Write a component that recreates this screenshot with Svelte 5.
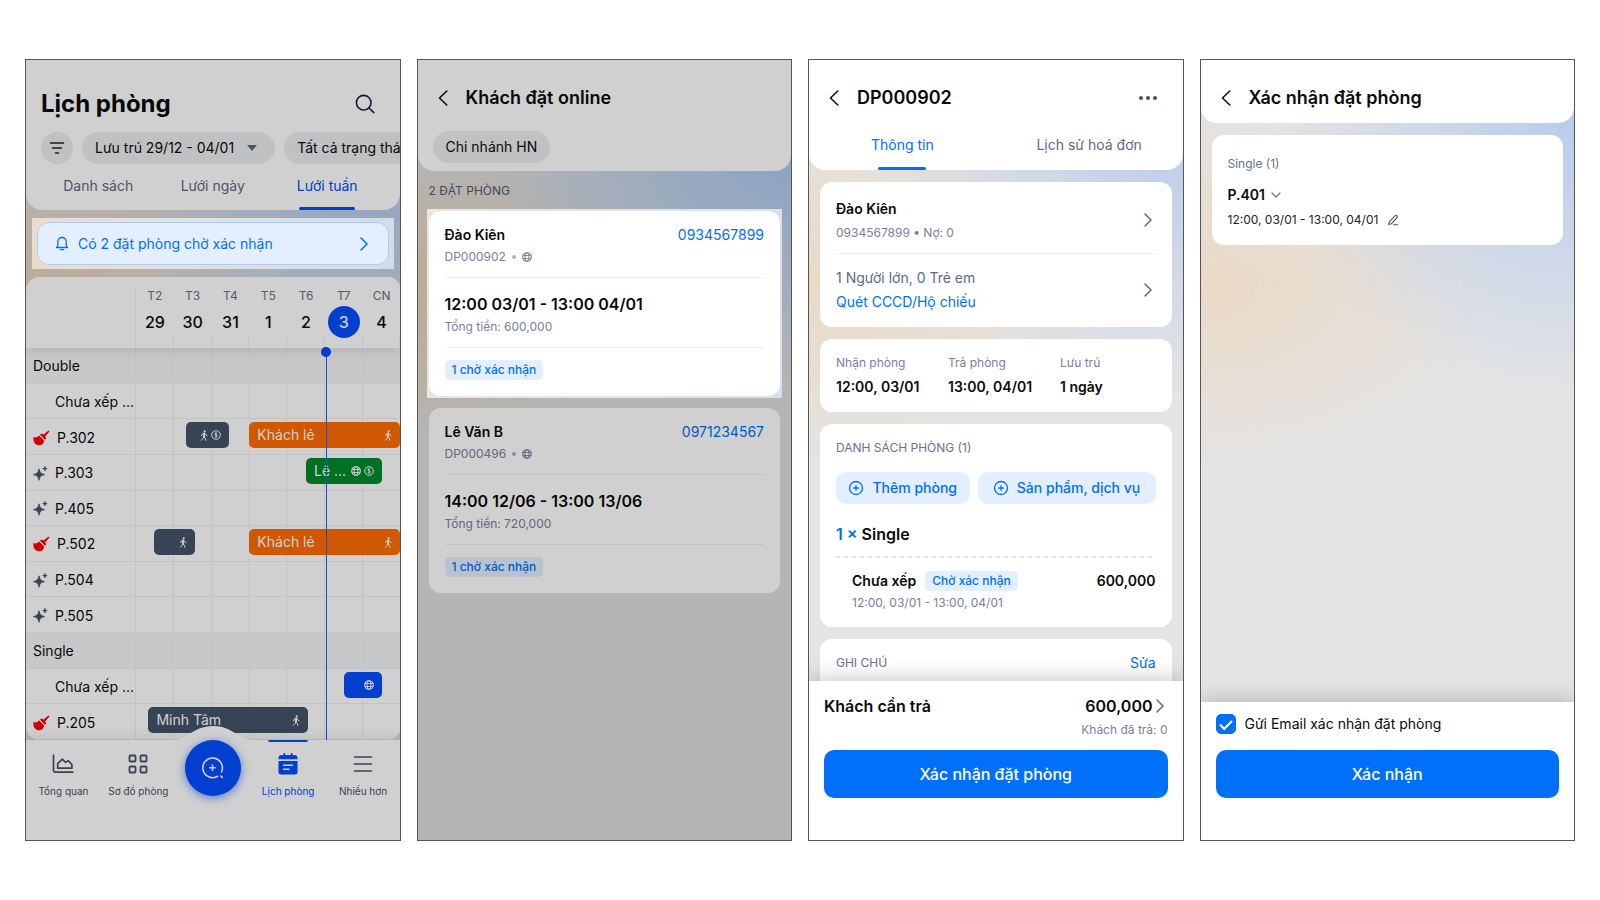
<script>
  const days = [
    { d: 'T2', n: 29 }, { d: 'T3', n: 30 }, { d: 'T4', n: 31 }, { d: 'T5', n: 1 },
    { d: 'T6', n: 2 }, { d: 'T7', n: 3, today: true }, { d: 'CN', n: 4 }
  ];

  // start and span are counted in day columns
  const rows = [
    { name: 'Double', kind: 'group' },
    { name: 'Chưa xếp ...', kind: 'none' },
    { name: 'P.302', kind: 'dirty', bars: [
      { start: 1.33, span: 1.12, tone: 'slate', icons: ['walk', 'coin'] },
      { start: 3, span: 4, tone: 'orange', text: 'Khách lẻ', icons: ['walk'] }
    ] },
    { name: 'P.303', kind: 'clean', bars: [{ start: 4.5, span: 2.02, tone: 'green', text: 'Lê ...', icons: ['globe', 'coin'] }] },
    { name: 'P.405', kind: 'clean' },
    { name: 'P.502', kind: 'dirty', bars: [
      { start: 0.48, span: 1.09, tone: 'slate', icons: ['walk'] },
      { start: 3, span: 4, tone: 'orange', text: 'Khách lẻ', icons: ['walk'] }
    ] },
    { name: 'P.504', kind: 'clean' },
    { name: 'P.505', kind: 'clean' },
    { name: 'Single', kind: 'group' },
    { name: 'Chưa xếp ...', kind: 'none', bars: [{ start: 5.5, span: 1.02, tone: 'blue', icons: ['globe'] }] },
    { name: 'P.205', kind: 'dirty', bars: [{ start: 0.33, span: 4.23, tone: 'slate', text: 'Minh Tâm', icons: ['walk'] }] }
  ];
  const nowAt = 5.03;

  const bookings = [
    { name: 'Đào Kiên', phone: '0934567899', code: 'DP000902', time: '12:00 03/01 - 13:00 04/01', total: '600,000', focus: true },
    { name: 'Lê Văn B', phone: '0971234567', code: 'DP000496', time: '14:00 12/06 - 13:00 13/06', total: '720,000' }
  ];

  let sendEmail = $state(true);
</script>

{#snippet icon(name)}
  {#if name === 'walk'}
    <svg viewBox="0 0 8 11" width="8" height="11" fill="none" stroke="currentColor" stroke-linecap="round" stroke-linejoin="round">
      <circle cx="4.7" cy="1.3" r="1.1" fill="currentColor" stroke="none" />
      <path d="M4.3 3.4 3.9 6.6" stroke-width="1.8" />
      <path d="M4.2 3.1 2.3 4 1.7 5.6M4.8 3.6l.8 1.3 1.4.6M3.7 6.8 3 8.5 1.3 10.3M4.1 6.8l1.3 1.5.4 2" stroke-width="1" />
    </svg>
  {:else if name === 'coin'}
    <svg viewBox="0 0 10 10" width="10" height="10" fill="none" stroke="currentColor">
      <circle cx="5" cy="5" r="4.3" stroke-width="1" />
      <path d="M6.4 3.7C6.1 3.1 5.6 3 5 3c-.8 0-1.4.3-1.4.9C3.6 5.3 6.4 4.5 6.4 6c0 .7-.6 1-1.4 1-.7 0-1.2-.2-1.5-.8M5 2.2v5.6" stroke-width=".8" />
    </svg>
  {:else if name === 'globe'}
    <svg viewBox="0 0 10 10" width="10" height="10" fill="none" stroke="currentColor">
      <circle cx="5" cy="5" r="4.3" stroke-width="1.1" />
      <ellipse cx="5" cy="5" rx="2" ry="4.3" />
      <path d="M.7 3.5h8.600M.7 6.5h8.600" stroke-width=".9" />
    </svg>
  {:else if name === 'dirty'}
    <svg viewBox="0 0 17 16" width="17" height="16" fill="#ff0000">
      <path d="M15.2.8c.7-.3 1.4.5.9 1.1l-4.1 4.500.7.8c.6.7.4 1.6-.2 2.1l-.7.5L7 4.7l.6-.6c.6-.6 1.5-.6 2.1 0l.6.6z" />
      <path d="M6.3 5.3 11.1 10.4C10.800 13 9 15.2 6.2 15.3 3.2 15.4.9 13.2.5 10.3L.3 6.8l1.900.9 1.200-.8 1.100.1z" />
      <path d="m6.5 5 4.900 5.200" stroke="#fff" stroke-width=".8" />
    </svg>
  {:else if name === 'clean'}
    <svg viewBox="0 0 15 15" width="15" height="15" fill="#44546a">
      <path d="M6 2.800C6.700 6.500 7.800 7.800 11.600 8.600 7.800 9.400 6.700 10.700 6 14.300 5.300 10.700 4.200 9.400.4 8.600 4.200 7.800 5.300 6.500 6 2.800z" stroke="#44546a" stroke-width=".8" stroke-linejoin="round" />
      <path d="M11.900.3v4.600M9.600 2.600h4.600" stroke="#44546a" stroke-width="1.400" />
    </svg>
  {:else if name === 'back'}
    <svg viewBox="0 0 10 16" width="10" height="16" fill="none" stroke="#111" stroke-width="1.600" stroke-linecap="round" stroke-linejoin="round"><path d="M8.800 1 1.500 8l7.300 7" /></svg>
  {:else if name === 'next'}
    <svg viewBox="0 0 8 14" width="8" height="14" fill="none" stroke="currentColor" stroke-width="1.500" stroke-linecap="round" stroke-linejoin="round"><path d="m1 1 6 6-6 6" /></svg>
  {:else if name === 'plus'}
    <svg viewBox="0 0 16 16" width="16" height="16" fill="none" stroke="currentColor" stroke-width="1.300"><circle cx="8" cy="8" r="6.500" /><path d="M8 5.200v5.600M5.200 8h5.600" /></svg>
  {/if}
{/snippet}

<main class="board">
  <section class="phone dimmed">
    <header class="top">
      <div class="title-row">
        <h1 class="big">Lịch phòng</h1>
        <button class="plain" aria-label="Tìm kiếm">
          <svg viewBox="0 0 20 20" width="20" height="20" fill="none" stroke="#16263f" stroke-width="1.600" stroke-linecap="round"><circle cx="8.700" cy="8.700" r="7.300" /><path d="m14 14 4.800 4.600" /></svg>
        </button>
      </div>
      <div class="chips">
        <button class="chip round" aria-label="Bộ lọc">
          <svg viewBox="0 0 16 14" width="16" height="14" stroke="#222" stroke-width="1.500" stroke-linecap="round"><path d="M1.500 2h13M3.500 7h9M6.500 12h3" /></svg>
        </button>
        <button class="chip date">Lưu trú 29/12 - 04/01 <span class="caret"></span></button>
        <button class="chip">Tất cả trạng thái</button>
      </div>
      <nav class="tabs three">
        <a href="#list">Danh sách</a>
        <a href="#day">Lưới ngày</a>
        <a href="#week" class="on">Lưới tuần</a>
      </nav>
    </header>

    <div class="spot notice-spot">
      <button class="notice">
        <svg viewBox="0 0 14 15" width="14" height="15" fill="none" stroke="currentColor" stroke-width="1.300" stroke-linecap="round" stroke-linejoin="round"><path d="M2.800 9.600V5.700a4.200 4.200 0 0 1 8.400 0v3.900l1.300 1.900h-11zM5.400 13.600h3.200M7 1.400V.8" /></svg>
        <span>Có 2 đặt phòng chờ xác nhận</span>
        {@render icon('next')}
      </button>
    </div>

    <table class="week">
      <thead>
        <tr>
          <th class="corner" aria-label="Phòng"></th>
          {#each days as day}
            <th class="day" class:today={day.today}><small>{day.d}</small><b>{day.n}</b></th>
          {/each}
        </tr>
      </thead>
      <tbody>
        {#each rows as row}
          <tr class={row.kind}>
            <th class="room">
              {#if row.kind === 'dirty' || row.kind === 'clean'}{@render icon(row.kind)}{/if}
              <span>{row.name}</span>
            </th>
            <td class="track">
              {#each row.bars ?? [] as bar}
                <span class="bar {bar.tone}" style="left: {(bar.start / 7) * 100}%; width: {(bar.span / 7) * 100}%">
                  {#if bar.text}<span class="who">{bar.text}</span>{/if}
                  {#each bar.icons as name}{@render icon(name)}{/each}
                </span>
              {/each}
            </td>
          </tr>
        {/each}
      </tbody>
      <caption class="now-area"><span class="now" style="left: {(nowAt / 7) * 100}%"></span></caption>
    </table>

    <nav class="bottom">
      <svg class="hump" viewBox="0 0 90 16" width="90" height="16"><path d="M0 16C20 16 24 1 45 1s25 15 45 15z" fill="#fff" /></svg>
      <a href="#overview">
        <svg viewBox="0 0 22 20" width="22" height="20" fill="none" stroke="#44546a" stroke-width="1.700" stroke-linecap="round" stroke-linejoin="round"><path d="M1.500 1v15.500c0 1 .6 1.600 1.600 1.600h17.700M5.700 14.200V9.600l4.600-4.500 3.300 3.300 2.700-1.800 3.600 4v3.600z" /></svg>
        <span>Tổng quan</span>
      </a>
      <a href="#rooms">
        <svg viewBox="0 0 20 20" width="20" height="20" fill="none" stroke="#44546a" stroke-width="1.800"><rect x="1.500" y="1.500" width="6" height="6" rx="1" /><rect x="12.500" y="1.500" width="6" height="6" rx="1" /><rect x="1.500" y="12.500" width="6" height="6" rx="1" /><rect x="12.500" y="12.500" width="6" height="6" rx="1" /></svg>
        <span>Sơ đồ phòng</span>
      </a>
      <div class="fab-slot">
        <button class="fab" aria-label="Đặt phòng">
          <svg viewBox="0 0 24 24" width="24" height="24" fill="none" stroke="#fff" stroke-width="1.600" stroke-linecap="round"><path d="M16.600 20.300a9.800 9.800 0 1 1 3.900-4.300M11.500 9v5.400M8.800 11.700h5.400M19.800 20l1.500 1.500" /></svg>
        </button>
      </div>
      <a href="#calendar" class="on">
        <svg viewBox="0 0 20 22" width="20" height="22" fill="#004eff"><path d="M3.500 2h2V.8a.9.900 0 0 1 1.800 0V2h5.400V.8a.9.900 0 0 1 1.800 0V2h2A3 3 0 0 1 19.500 5v1.200H.5V5a3 3 0 0 1 3-3zM.5 8h19v11a2.500 2.500 0 0 1-2.500 2.500H3A2.500 2.500 0 0 1 .5 19z" /><path d="M5.500 12.300h9M5.500 16.300h5.500" stroke="#fff" stroke-width="1.500" stroke-linecap="round" /></svg>
        <span>Lịch phòng</span>
      </a>
      <a href="#more">
        <svg viewBox="0 0 20 18" width="20" height="18" stroke="#44546a" stroke-width="1.700" stroke-linecap="round"><path d="M1.500 2h17M1.500 9h17M1.500 16h17" /></svg>
        <span>Nhiều hơn</span>
      </a>
    </nav>
  </section>

  <section class="phone dimmed">
    <header class="top sub">
      <div class="title-row">
        <button class="plain" aria-label="Quay lại">{@render icon('back')}</button>
        <h2>Khách đặt online</h2>
      </div>
      <div class="chips"><button class="chip">Chi nhánh HN</button></div>
    </header>
    <p class="count">2 ĐẶT PHÒNG</p>
    <div class="bookings">
      {#each bookings as b}
        <div class:spot={b.focus} class="booking-slot">
          <article class="card booking">
            <div class="line"><strong>{b.name}</strong><a href="tel:{b.phone}">{b.phone}</a></div>
            <div class="meta">{b.code}<i class="dot"></i>{@render icon('globe')}</div>
            <hr />
            <div class="when">{b.time}</div>
            <div class="meta">Tổng tiền: {b.total}</div>
            <hr />
            <span class="tag">1 chờ xác nhận</span>
          </article>
        </div>
      {/each}
    </div>
  </section>

  <section class="phone">
    <header class="top sub">
      <div class="title-row">
        <button class="plain" aria-label="Quay lại">{@render icon('back')}</button>
        <h2>DP000902</h2>
        <button class="plain" aria-label="Thêm">
          <svg viewBox="0 0 18 4" width="18" height="4" fill="#44546a"><circle cx="2" cy="2" r="2" /><circle cx="9" cy="2" r="2" /><circle cx="16" cy="2" r="2" /></svg>
        </button>
      </div>
      <nav class="tabs two">
        <a href="#info" class="on">Thông tin</a>
        <a href="#history">Lịch sử hoá đơn</a>
      </nav>
    </header>
    <div class="scroll">
      <article class="card guest">
        <a href="#guest" class="entry">
          <span class="stack"><strong>Đào Kiên</strong><span class="meta">0934567899 • Nợ: 0</span></span>
          {@render icon('next')}
        </a>
        <hr />
        <a href="#people" class="entry">
          <span class="stack"><span class="people">1 Người lớn, 0 Trẻ em</span><span class="link">Quét CCCD/Hộ chiếu</span></span>
          {@render icon('next')}
        </a>
      </article>
      <dl class="card stay">
        <div><dt>Nhận phòng</dt><dd>12:00, 03/01</dd></div>
        <div><dt>Trả phòng</dt><dd>13:00, 04/01</dd></div>
        <div><dt>Lưu trú</dt><dd>1 ngày</dd></div>
      </dl>
      <article class="card rooms">
        <h3>DANH SÁCH PHÒNG (1)</h3>
        <div class="adds">
          <button class="add">{@render icon('plus')} Thêm phòng</button>
          <button class="add wide">{@render icon('plus')} Sản phẩm, dịch vụ</button>
        </div>
        <div class="type"><span>1 ×</span> Single</div>
        <svg class="dash" height="2" width="100%"><path d="M0 1h2000" stroke="#e3e6ea" stroke-width="2" stroke-dasharray="4 4" /></svg>
        <div class="unit">
          <div class="line"><span class="state"><strong>Chưa xếp</strong><span class="tag">Chờ xác nhận</span></span><strong>600,000</strong></div>
          <div class="meta">12:00, 03/01 - 13:00, 04/01</div>
        </div>
      </article>
      <article class="card note">
        <div class="line"><h3>GHI CHÚ</h3><a href="#edit">Sửa</a></div>
      </article>
    </div>
    <footer class="foot pay">
      <div class="line due"><strong>Khách cần trả</strong><a href="#pay">600,000 {@render icon('next')}</a></div>
      <div class="meta paid">Khách đã trả: 0</div>
      <button class="primary">Xác nhận đặt phòng</button>
    </footer>
  </section>

  <section class="phone">
    <header class="top short">
      <div class="title-row">
        <button class="plain" aria-label="Quay lại">{@render icon('back')}</button>
        <h2>Xác nhận đặt phòng</h2>
      </div>
    </header>
    <div class="scroll">
      <article class="card pick">
        <div class="kind">Single (1)</div>
        <button class="plain number">P.401
          <svg viewBox="0 0 10 6" width="10" height="6" fill="none" stroke="#64748b" stroke-width="1.200" stroke-linecap="round" stroke-linejoin="round"><path d="m1 1 4 4 4-4" /></svg>
        </button>
        <div class="dates">12:00, 03/01 - 13:00, 04/01
          <button class="plain" aria-label="Sửa ngày">
            <svg viewBox="0 0 12 12" width="12" height="12" fill="none" stroke="#44546a" stroke-width="1.100" stroke-linecap="round" stroke-linejoin="round"><path d="M1.700 10.500 2.300 7.900 8.100 1.700c.9-.9 2.900.9 2 1.900L4.300 9.800zM6.500 10.700h4.200" /></svg>
          </button>
        </div>
      </article>
    </div>
    <footer class="foot">
      <label class="check"><input type="checkbox" bind:checked={sendEmail} /> Gửi Email xác nhận đặt phòng</label>
      <button class="primary">Xác nhận</button>
    </footer>
  </section>
</main>

<style>
  :global(body) { margin: 0; background: #fff; }
  .board {
    box-sizing: border-box; height: 100vh; min-height: 860px; padding: 59px 25px;
    display: grid; grid-template-columns: repeat(4, minmax(0, 1fr)); gap: 16px;
    font-family: Inter, "Noto Sans", sans-serif; font-size: 14px; line-height: 20px; color: #0a0a0a;
  }
  .board :global(*) { box-sizing: border-box; }
  button { font: inherit; color: inherit; border: 0; cursor: pointer; }
  a { color: #0070f4; text-decoration: none; }
  svg { display: block; flex: none; }
  h1, h2, h3, p, dl, dd { margin: 0; }
  strong { font-weight: 600; }
  hr { width: 100%; height: 1px; margin: 0; border: 0; background: #edeff1; }
  .plain { background: none; padding: 0; display: flex; align-items: center; }

  .phone {
    position: relative; display: flex; flex-direction: column; overflow: hidden; min-height: 0;
    border: 1px solid #555;
    background:
      radial-gradient(ellipse 300px 280px at 100% 60px, #b8cdec, rgba(184, 205, 236, 0)),
      radial-gradient(ellipse 300px 180px at 0 225px, #ead9c5, rgba(234, 217, 197, 0)),
      #e4e4e4;
  }
  .dimmed::after { content: ""; position: absolute; inset: 0; z-index: 4; background: rgba(0, 0, 0, .185); pointer-events: none; }
  .dimmed { background:
      radial-gradient(ellipse 310px 260px at 100% 80px, #a9c8f2, rgba(169, 200, 242, 0)),
      radial-gradient(ellipse 260px 150px at 0 235px, #e8d2b8, rgba(232, 210, 184, 0)),
      #dedede; }
  .spot { position: relative; z-index: 5; }

  .top { background: #fff; border-radius: 0 0 16px 16px; padding: 28px 15px 0; flex: none; }
  .title-row { display: flex; align-items: center; height: 32px; }
  .big { flex: 1; font-size: 24px; line-height: 32px; font-weight: 700; }
  .top:not(.sub, .short) .title-row { padding-right: 10px; }
  h2 { font-size: 18px; line-height: 24px; font-weight: 600; flex: 1; }
  .sub, .short { padding-top: 22px; }
  .sub .title-row, .short .title-row { padding: 0 11px 0 5px; gap: 18px; }
  .short { height: 63px; }
  .chips { display: flex; gap: 9px; margin: 12px -15px 0 0; overflow: hidden; }
  .sub .chips { margin-top: 17px; padding-bottom: 8px; }
  .chip { flex: none; height: 32px; border-radius: 16px; padding: 0 13px; background: #ecedf0; display: flex; align-items: center; gap: 13px; white-space: nowrap; }
  .round { width: 32px; padding: 0; justify-content: center; }
  .caret { border: 5px solid transparent; border-top: 6px solid #5d6b7e; border-bottom: 0; }
  .date { padding-right: 18px; }

  .tabs { display: grid; text-align: center; }
  .tabs a { position: relative; color: #5b6b80; }
  .tabs a.on { color: #004eff; }
  .tabs a.on::after { content: ""; position: absolute; left: 50%; bottom: 0; width: 56px; height: 3px; margin-left: -28px; border-radius: 2px; background: currentColor; }
  .three { grid-template-columns: repeat(3, 1fr); }
  .three a { padding: 12px 0 14px; }
  .two { grid-template-columns: 1fr 1fr; margin: 12px -15px 0; }
  .two a { padding: 9px 0 15px; }
  .two a.on { color: #0070f4; }
  .two a.on::after { width: 48px; margin-left: -24px; }

  .notice-spot { margin: 8px 6px 8px; padding: 4px 5px; background: linear-gradient(90deg, #eadccc, #e0e1e4 45%, #d2dbe8); }
  .notice { width: 100%; height: 43px; padding: 0 20px 0 17px; display: flex; align-items: center; gap: 9px; border: 1px solid #a9cdf9; border-radius: 12px; background: #e3efff; color: #0070f4; }
  .notice span { flex: 1; text-align: left; }

  .week {
    position: relative; flex: 1; min-height: 0; overflow: hidden; display: grid; grid-template-rows: 71px repeat(11, minmax(0, 1fr));
    margin-right: -1px; background: #fff; border-radius: 14px; border-spacing: 0;
  }
  thead, tbody { display: contents; }
  tr { display: grid; grid-template-columns: 110px minmax(0, 1fr); min-height: 0; }
  thead tr { grid-template-columns: 110px repeat(7, minmax(0, 1fr)); position: relative; z-index: 1; background: #fff; box-shadow: 0 3px 10px rgba(0, 0, 0, .1); }
  th, td { padding: 0; font-weight: 400; }
  .corner { border-right: 1px solid #edeff1; margin-top: 12px; }
  .day { display: flex; flex-direction: column; align-items: center; padding-top: 11px; background: linear-gradient(#edeff1, #edeff1) right bottom / 1px 12px no-repeat; }
  .day small { font-size: 12px; line-height: 16px; color: #64748b; }
  .day b { width: 32px; height: 32px; margin-top: 2px; border-radius: 50%; font-size: 16px; line-height: 32px; font-weight: 500; text-align: center; }
  .today b { background: #004eff; color: #fff; }
  tbody tr { border-bottom: 1px solid #edeff1; }
  .room { display: flex; align-items: center; gap: 7px; padding: 2px 0 0 7px; border-right: 1px solid #edeff1; text-align: left; white-space: nowrap; }
  .none .room { padding-left: 29px; }
  .group { background: #f4f5f7; }
  .track { position: relative; background: repeating-linear-gradient(90deg, transparent 0 calc(100% / 7 - 1px), #edeff1 calc(100% / 7 - 1px) calc(100% / 7)); }
  .bar { position: absolute; top: 3px; height: 26px; display: flex; align-items: center; justify-content: flex-end; gap: 3px; padding: 0 8px; border-radius: 5px; color: #fff; white-space: nowrap; }
  .who { margin-right: auto; }
  .slate { background: #44546a; }
  .orange { background: #ff6c00; }
  .green { background: #008a2b; }
  .blue { background: #004eff; }
  .now-area { position: absolute; top: 71px; bottom: 0; left: 110px; right: 0; z-index: 2; pointer-events: none; }
  .now { position: absolute; top: 4px; bottom: 0; border-left: 1px solid #1d62ff; }
  .now::before { content: ""; position: absolute; top: -5px; left: -6px; width: 10px; height: 10px; border-radius: 50%; background: #004eff; }

  .bottom { position: relative; z-index: 3; flex: none; height: 100px; display: grid; grid-template-columns: repeat(5, minmax(0, 1fr)); margin-right: -1px; background: #fff; box-shadow: 0 -2px 14px rgba(0, 0, 0, .1); }
  .bottom a { position: relative; display: flex; flex-direction: column; align-items: center; color: #44546a; font-size: 10px; line-height: 14px; white-space: nowrap; }
  .bottom a svg { height: 22px; margin: 13px 0 9px; }
  .bottom a.on { color: #004eff; }
  .bottom a.on::before { content: ""; position: absolute; top: 0; width: 40px; height: 2px; background: #004eff; border-radius: 0 0 2px 2px; }
  .hump { position: absolute; left: 50%; top: -15px; margin-left: -45px; }
  .fab-slot { display: flex; justify-content: center; position: relative; }
  .fab { width: 56px; height: 56px; flex: none; padding: 0; border-radius: 50%; background: #004eff; display: grid; place-items: center; box-shadow: 0 2px 10px rgba(0, 78, 255, .6); }

  .count { padding: 11px 11px 8px; font-size: 12px; line-height: 17px; color: #4c5c72; }
  .bookings { display: flex; flex-direction: column; gap: 12px; padding: 4px 11px 0; }
  .booking-slot.spot { margin: -2px; padding: 2px; background: linear-gradient(90deg, #ece5dc, #d9e0eb); }
  .card { background: #fff; border-radius: 12px; padding: 0 16px; }
  .line { display: flex; justify-content: space-between; align-items: center; }
  .meta { display: flex; align-items: center; font-size: 12px; line-height: 16px; color: #75829a; }
  .dot { width: 4px; height: 4px; margin: 0 6px; border-radius: 50%; background: #a9b2c0; }
  .booking { height: 185px; padding-top: 14px; }
  .booking .meta { margin-top: 4px; }
  .booking hr { margin: 12px 0 15px; }
  .booking hr:last-of-type { margin-bottom: 12px; }
  .when { font-size: 16px; line-height: 22px; font-weight: 600; }
  .tag { display: block; width: fit-content; height: 20px; padding: 0 7px; border-radius: 5px; background: #e3efff; color: #0070f4; font-size: 12px; line-height: 20px; font-weight: 500; }

  .scroll { flex: 1; min-height: 0; overflow: hidden; display: flex; flex-direction: column; gap: 12px; padding: 12px 11px 0; }
  .scroll .card { flex: none; }
  .guest { padding-top: 17px; padding-bottom: 15px; }
  .entry { display: flex; align-items: center; justify-content: space-between; padding-right: 4px; color: #5b6b80; }
  .entry strong { color: #0a0a0a; }
  .stack { display: flex; flex-direction: column; gap: 6px; }
  .guest hr { margin: 12px 0 13px; }
  .entry .people, .entry .link { line-height: 21px; }
  .entry:last-child .stack { gap: 3px; }
  .link { color: #0070f4; }
  .stay { display: grid; grid-template-columns: 112px 112px 1fr; height: 73px; padding-top: 16px; }
  dt { font-size: 12px; line-height: 16px; color: #75829a; }
  dd { margin-top: 6px; font-weight: 600; }
  h3 { font-size: 12px; line-height: 16px; font-weight: 400; color: #64748b; }
  .rooms { padding-top: 16px; padding-bottom: 16px; }
  .adds { display: flex; gap: 8px; margin-top: 16px; }
  .add { flex: 3 1 0; height: 32px; padding: 0; border-radius: 10px; background: #e3efff; color: #0070f4; display: flex; align-items: center; justify-content: center; gap: 8px; font-weight: 500; white-space: nowrap; }
  .add.wide { flex-grow: 4; }
  .type { margin-top: 18px; font-size: 16px; line-height: 24px; font-weight: 600; }
  .type span { color: #0070f4; }
  .dash { margin-top: 10px; }
  .unit { padding: 13px 0 0 16px; }
  .unit .line { height: 20px; }
  .unit .meta { margin-top: 4px; }
  .state { display: flex; align-items: center; gap: 9px; }
  .note { padding-top: 14px; padding-bottom: 24px; }

  .foot { position: relative; flex: none; background: #fff; padding: 12px 15px 42px; box-shadow: 0 -2px 20px rgba(0, 0, 0, .22); }
  .pay { padding-top: 13px; }
  .due { font-size: 16px; line-height: 24px; }
  .due a { display: flex; align-items: center; gap: 3px; padding-right: 4px; color: #0a0a0a; font-weight: 600; }
  .due a :global(svg) { color: #5b6b80; }
  .paid { justify-content: flex-end; margin: 4px 0 12px; }
  .primary { display: block; width: 100%; height: 48px; border-radius: 10px; background: #0070f8; color: #fff; font-size: 16px; font-weight: 500; }
  .check { display: flex; align-items: center; gap: 9px; margin-bottom: 16px; }
  .check input { appearance: none; width: 20px; height: 20px; margin: 0; border: 1px solid #0070f8; border-radius: 5px; display: grid; place-items: center; }
  .check input:checked { background: #0070f8; }
  .check input:checked::before { content: ""; width: 10px; height: 5px; border: solid #fff; border-width: 0 0 2px 2px; transform: translateY(-1px) rotate(-45deg); }

  .pick { padding-top: 20px; padding-bottom: 16px; }
  .kind { font-size: 12px; line-height: 18px; color: #64748b; }
  .number { margin-top: 12px; gap: 6px; font-weight: 600; }
  .dates { display: flex; align-items: center; gap: 9px; margin-top: 6px; font-size: 12px; line-height: 18px; color: #222; }
</style>
